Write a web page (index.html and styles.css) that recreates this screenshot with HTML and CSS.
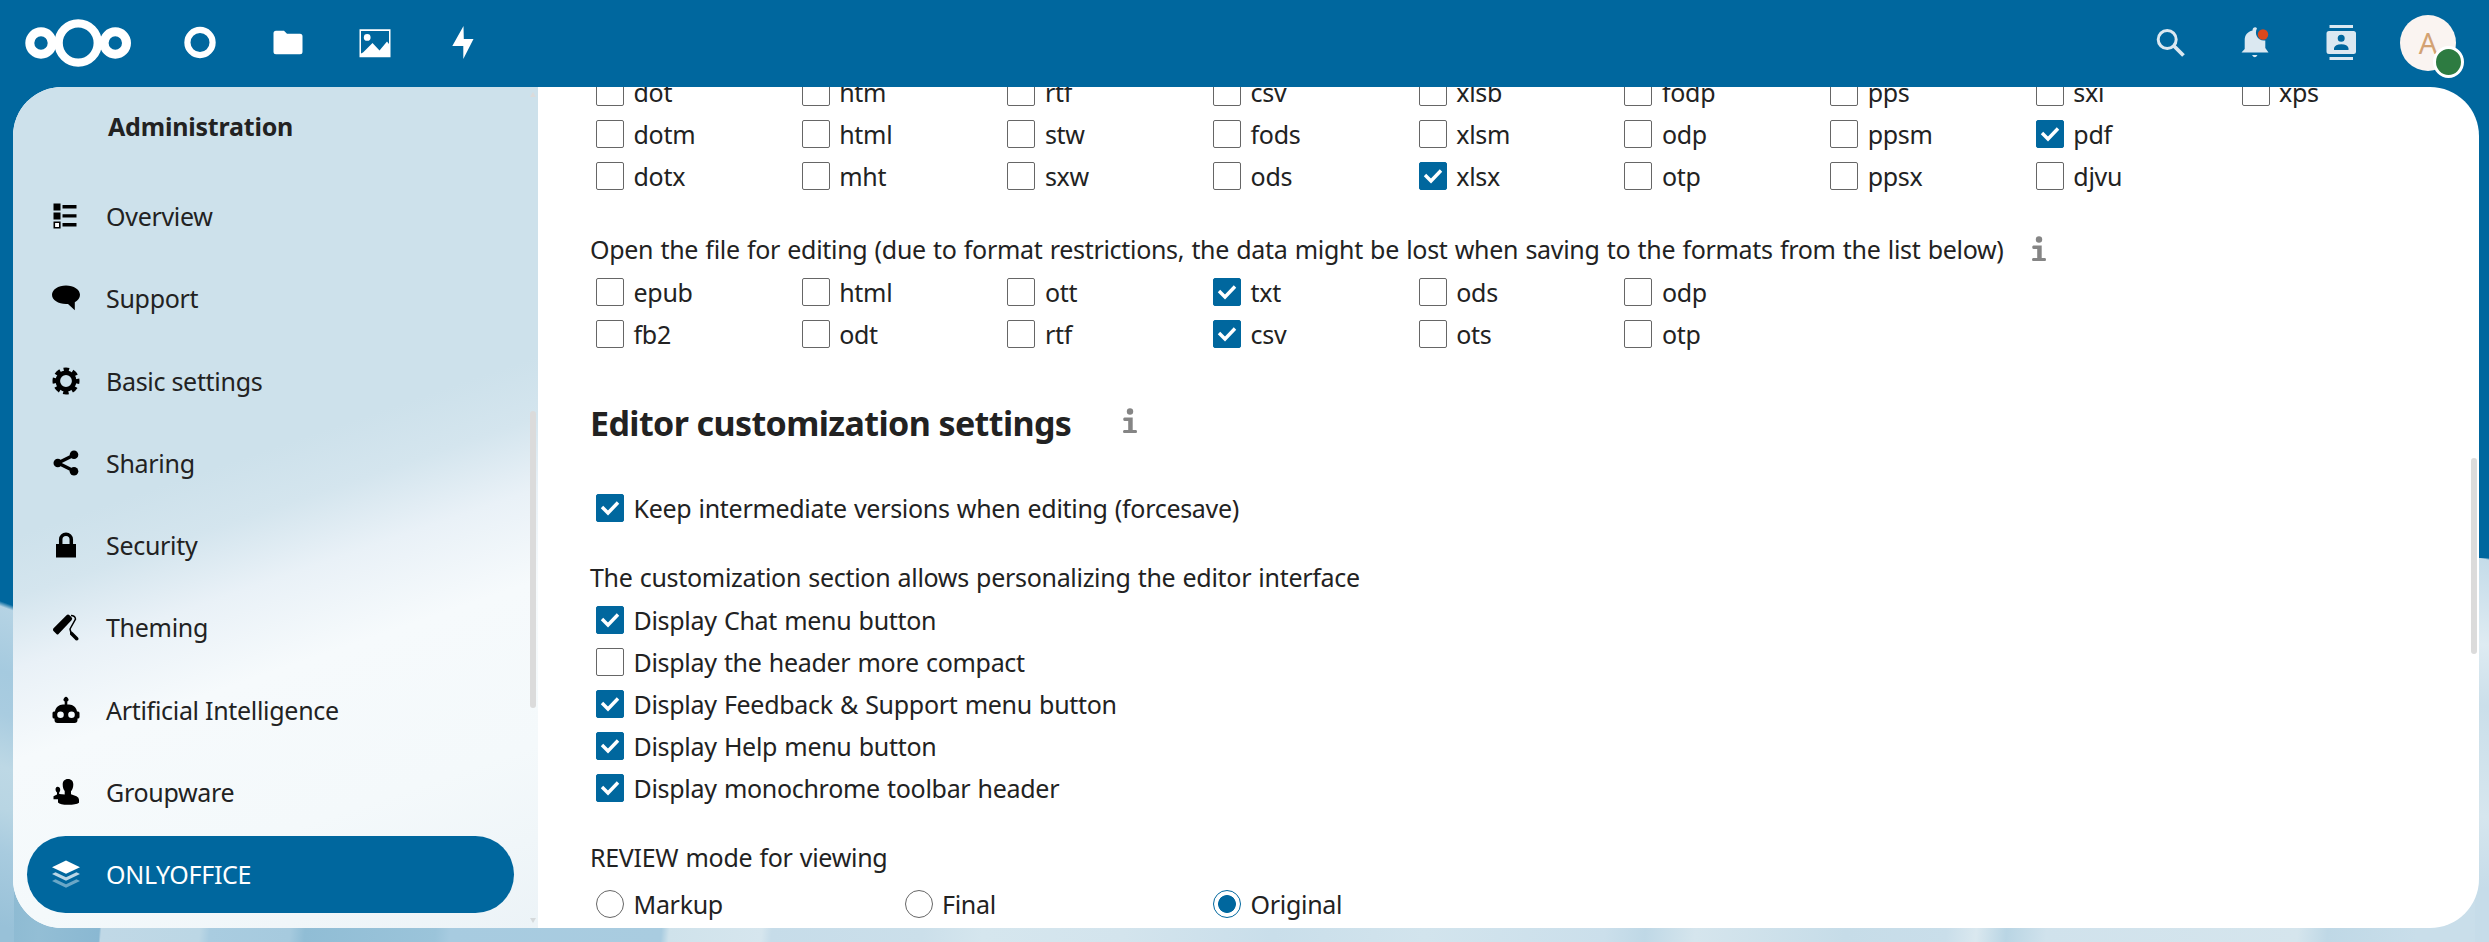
FILE: index.html
```html
<!DOCTYPE html>
<html lang="en">
<head>
<meta charset="utf-8">
<title>ONLYOFFICE - Administration settings</title>
<link rel="stylesheet" href="styles.css">
</head>
<body>
<header class="topbar">
  <svg class="logo" viewBox="0 0 108 50"><g fill="none" stroke="#fff"><circle cx="17" cy="25" r="11.2" stroke-width="9"/><circle cx="54.2" cy="25" r="19.6" stroke-width="8.4"/><circle cx="91.3" cy="25" r="11.2" stroke-width="9"/></g></svg>
  <nav class="apps">
    <svg class="app" viewBox="0 0 36 36"><circle cx="18" cy="17.5" r="12.6" fill="none" stroke="#fff" stroke-width="6.2"/></svg>
    <svg class="app" viewBox="0 0 36 36"><path fill="#fff" d="M5 5.8h9l3 3h13q2.500 0 2.500 2.500v15.500q0 2.500-2.500 2.500h-24q-2.500 0-2.500-2.500V8.300q0-2.500 2.500-2.500z"/></svg>
    <svg class="app" viewBox="0 0 36 36"><path fill="#fff" fill-rule="evenodd" d="M2.500 4.300h31v28h-31zM4 6v22.500l2-1 9.500-9.500 7 7.500L30 16.500l2 2.500V6zM10.200 9a3.400 3.400 0 1 1 0 6.800A3.400 3.400 0 1 1 10.200 9z"/></svg>
    <svg class="app" viewBox="0 0 36 36"><path fill="#fff" d="M18.500 1l-11.200 20h11v13L28.500 14h-9.700z"/></svg>
  </nav>
  <div class="tools">
    <svg class="tool" viewBox="0 0 40 40"><g fill="none" stroke="#dbe8f1"><circle cx="16.200" cy="16.500" r="9" stroke-width="3"/><path stroke-width="3.800" d="M22 22l10.500 10.500"/></g></svg>
    <svg class="tool bell" viewBox="0 0 40 40"><path fill="#dbe8f1" d="M17.500 7.500C17.500 4 21 3.500 22 5.500c-3 5 .5 13 8.300 12V25l3.200 4.500h-27L9.700 26V17c0-5 3-8.500 7.800-9.500zM17 32h5.500q-2.700 4.500-5.500 0z"/><circle cx="28" cy="11.500" r="5.200" fill="#d9481c"/></svg>
    <svg class="tool" viewBox="0 0 40 40"><path fill="#dbe8f1" fill-rule="evenodd" d="M8.500 2h23.500v3H8.500zM8.500 34h23.500v3H8.500zM8 8h24.500q2.500 0 2.500 2.500v18q0 2.500-2.500 2.500H8q-2.500 0-2.500-2.500v-18Q5.500 8 8 8zm12.200 3.800a3.500 3.500 0 1 0 0 7 3.500 3.500 0 1 0 0-7zM13 27h14.500v-2q-1-3.500-7.200-3.700-6.300.2-7.300 3.700z"/></svg>
    <div class="avatar">A<span class="status"></span></div>
  </div>
</header>
<div class="panel">
  <aside class="sidebar">
    <h2 class="caption">Administration</h2>
    <ul class="menu">
      <li class="item"><svg class="icon" viewBox="0 0 28 28"><path d="M1.500 1.500h7v7h-7zM10.500 3h14v3.500h-14zM1.500 10.500h7v7h-7zM10.500 12.200h14v3.300h-14zM10.500 21h14v3.500h-14z"/><path fill="#fff" stroke="#000" stroke-width="1.600" d="M2.300 20.300h5.500v5.500H2.300z"/></svg>Overview</li>
      <li class="item"><svg class="icon" viewBox="0 0 28 28"><path d="M14 1.500c7.700 0 14 4 14 9.300 0 3-2 5.800-5.200 7.500v8l-6.800-6.400-2 .1C6.300 20 0 16 0 10.800S6.300 1.500 14 1.500z"/></svg>Support</li>
      <li class="item"><svg class="icon" viewBox="0 0 28 28"><circle cx="14" cy="14" r="8.200" fill="none" stroke="#000" stroke-width="4.600"/><path fill="none" stroke="#000" stroke-width="5" stroke-dasharray="5.200 3.439" stroke-dashoffset="2.600" d="M25 14a11 11 0 1 1-22 0 11 11 0 1 1 22 0z"/></svg>Basic settings</li>
      <li class="item"><svg class="icon" viewBox="0 0 28 28"><path fill="none" stroke="#000" stroke-width="3.500" d="M22 6L6 14l16 8"/><circle cx="22" cy="5.800" r="4.300"/><circle cx="5.800" cy="14" r="4.300"/><circle cx="22" cy="22.300" r="4.300"/></svg>Sharing</li>
      <li class="item"><svg class="icon" viewBox="0 0 28 28"><path d="M4 13h20v13.500H4z"/><path fill="none" stroke="#000" stroke-width="3.500" d="M8.700 14V8.500a5.300 5.300 0 0 1 10.600 0V14"/></svg>Security</li>
      <li class="item"><svg class="icon" viewBox="0 0 28 28"><path d="M1.300 15.500L14.500 2.300q1.500-1.500 3 0l2 2q1.500 1.500 0 3L6.500 21q-1 1-2 0l-3-3q-1-1-.2-2.500z"/><path fill="none" stroke="#000" stroke-width="1.500" d="M19 2.500q4 0 4.500 3.500l-5.500 10 1 4"/><path d="M18 19q1.500-1 3 .5l5 5q1.500 2-1 3-1.500 0-2.500-1.500l-4.500-4.500z"/></svg>Theming</li>
      <li class="item"><svg class="icon" viewBox="0 0 28 28"><path fill-rule="evenodd" d="M12.700 5.500a2.400 2.400 0 1 1 2.600 0V8.500H17c4 0 7.500 3 8 7h1q1.500 0 1.500 1.500v4q0 1.500-1.500 1.500h-.5V24q0 3-3 3h-17q-3 0-3-3v-1.500H2Q.5 22.500.5 21v-4q0-1.500 1.500-1.500h1c.5-4 4-7 8-7h1.700zM8.500 15.500a3.300 3.300 0 1 0 0 6.600 3.300 3.300 0 1 0 0-6.600zm11 0a3.300 3.300 0 1 0 0 6.600 3.300 3.300 0 1 0 0-6.600z"/></svg>Artificial Intelligence</li>
      <li class="item"><svg class="icon" viewBox="0 0 28 28"><path d="M16 1c3.500 0 5.300 2.300 5.300 5.500 0 3-.8 5-2.300 6.800v3l5.500 2q2.500 1 2.500 3.500v3q-3 2-11 2T6 24.500v-3.200H1.500v-3L5 16.500v-2c-2-1.500-2-5.500.5-5.700 3-.2 3.500 4 1.700 5.700v1.500l5.500.5V13c-1.300-1.500-2-3.500-2-6.500C10.700 3.300 12.500 1 16 1z"/></svg>Groupware</li>
      <li class="item active"><svg class="icon" viewBox="0 0 28 28"><path fill="#fff" d="M14 .5l14 6.700-14 6.500L0 7.200z"/><path fill="#b9d6e6" d="M0 14l3.500-1.700L14 17.200l10.500-4.900L28 14l-14 6.700z"/><path fill="#6aa7c7" d="M0 21l3.500-1.700L14 24.200l10.500-4.900L28 21l-14 6.700z"/></svg>ONLYOFFICE</li>
    </ul>
    <span class="arrow up"></span><span class="bar side-bar"></span><span class="arrow down"></span>
  </aside>
  <main class="content">
    <div class="grid first">
      <span class="opt">dot</span><span class="opt">htm</span><span class="opt">rtf</span><span class="opt">csv</span><span class="opt">xlsb</span><span class="opt">fodp</span><span class="opt">pps</span><span class="opt">sxi</span><span class="opt">xps</span>
      <span class="opt">dotm</span><span class="opt">html</span><span class="opt">stw</span><span class="opt">fods</span><span class="opt">xlsm</span><span class="opt">odp</span><span class="opt">ppsm</span><span class="opt on">pdf</span><span></span>
      <span class="opt">dotx</span><span class="opt">mht</span><span class="opt">sxw</span><span class="opt">ods</span><span class="opt on">xlsx</span><span class="opt">otp</span><span class="opt">ppsx</span><span class="opt">djvu</span>
    </div>
    <p class="text lead"><span class="lead-text">Open the file for editing (due to format restrictions, the data might be lost when saving to the formats from the list below)</span><svg class="info" viewBox="0 0 16 26"><circle cx="8" cy="3.500" r="3.200"/><path d="M2.500 9.500h8.200V22H14q1 0 1 1.500T14 25H2.200q-1.200 0-1.200-1.500T2.200 22h4v-9H2.500q-1.300 0-1.300-1.700t1.300-1.800z"/></svg></p>
    <div class="grid">
      <span class="opt">epub</span><span class="opt">html</span><span class="opt">ott</span><span class="opt on">txt</span><span class="opt">ods</span><span class="opt">odp</span><span></span><span></span><span></span>
      <span class="opt">fb2</span><span class="opt">odt</span><span class="opt">rtf</span><span class="opt on">csv</span><span class="opt">ots</span><span class="opt">otp</span>
    </div>
    <h2 class="title"><span class="title-text">Editor customization settings</span><svg class="info" viewBox="0 0 16 26"><circle cx="8" cy="3.500" r="3.200"/><path d="M2.500 9.500h8.200V22H14q1 0 1 1.500T14 25H2.200q-1.200 0-1.200-1.500T2.200 22h4v-9H2.500q-1.300 0-1.300-1.700t1.300-1.800z"/></svg></h2>
    <div class="list"><span class="opt on">Keep intermediate versions when editing (forcesave)</span></div>
    <p class="text section">The customization section allows personalizing the editor interface</p>
    <div class="list">
      <span class="opt on">Display Chat menu button</span>
      <span class="opt">Display the header more compact</span>
      <span class="opt on">Display Feedback &amp; Support menu button</span>
      <span class="opt on">Display Help menu button</span>
      <span class="opt on">Display monochrome toolbar header</span>
    </div>
    <p class="text section">REVIEW mode for viewing</p>
    <div class="radios"><span class="opt radio">Markup</span><span class="opt radio">Final</span><span class="opt radio on">Original</span></div>
    <span class="bar main-bar"></span>
  </main>
</div>
</body>
</html>
```
FILE: styles.css
```css
* { box-sizing: border-box; }
body {
  margin: 0; width: 2489px; height: 942px; overflow: hidden;
  font-family: "Noto Sans", "Open Sans", sans-serif; font-size: 25px; color: #222;
  background:
    linear-gradient(#00679e, #00679e) 0 0 / 100% 558px no-repeat,
    linear-gradient(200deg, #00679e 45px, #b5d3e4 50px, #a5cadf 110px, #a9cce0 150px, #bdd8e5 200px, #b8d5e3 240px, #a8cbdf 280px, #98c1d8 350px) 0 558px / 14px 384px no-repeat,
    linear-gradient(190deg, #00679e 4px, #c5dce9 6px, #deebf2 90px, #cbdfea 150px, #d6e6ee 260px, #c6dce9 330px) 100% 554px / 14px 388px no-repeat,
    linear-gradient(95deg, #9cc4da 0, #88b7d0 60px, #93bed5 120px, #8ab8d2 180px, #c0d8e6 182px, #bcd7e5 280px, #a9cce0 290px, #a6cade 370px, #90bdd5 385px, #9bc4da 515px, #a7cbe0 530px, #a9cce0 740px, #cfe2eb 748px, #d6e6ee 840px, #c6dce9 850px, #cbdfea 1000px, #d5e6ee 1060px, #d3e4ed 1200px, #c9deea 1350px, #d2e4ed 1500px, #cbdfeb 1680px, #bfd8e6 1720px, #d5e5ed 1770px, #c6dce8 1920px, #c9deea 2020px, #dae8ef 2050px, #b9d5e4 2080px, #d0e2ec 2120px, #d5e5ed 2370px, #bfd8e6 2400px, #c9deea 2489px);
}
.topbar { height: 87px; display: flex; align-items: center; padding: 0 26px 0 24px; }
.logo { width: 108px; height: 50px; margin-bottom: 1px; }
.apps { display: flex; gap: 51.500px; margin: 0 0 1px 50px; }
.app { width: 36px; height: 36px; }
.tools { display: flex; align-items: center; margin-left: auto; height: 87px; }
.tool { width: 40px; height: 40px; margin-right: 45px; margin-bottom: 2px; }
.bell { margin-left: -1.500px; margin-right: 46.500px; }
.avatar { position: relative; width: 56px; height: 56px; border-radius: 50%; margin: 0 7px 1px -6px; background: #faf4f1; color: #d3a273; text-align: center; line-height: 56px; font-size: 29px; }
.status { position: absolute; left: 33px; top: 31px; width: 31px; height: 32px; border-radius: 50%; border: 3px solid #fff; background: #2d7b41; }
.panel { display: flex; width: 2466px; height: 841px; margin-left: 13px; border-radius: 49px; overflow: hidden; background: #fff; }
.sidebar { position: relative; width: 525px; padding: 0 24px 0 14px; background: linear-gradient(161deg, #cde1eb 44%, #d4e5ee 50%, #e9f1f7 57%, #f6fafc 66%, #f4f9fb 82%, #ecf3f7 100%); }
.caption { margin: 0 0 51px; padding: 21px 0 0 81px; height: 40px; line-height: 36px; font-size: 25px; font-weight: 700; letter-spacing: -.2px; }
.menu { list-style: none; margin: 0; padding: 0; display: flex; flex-direction: column; gap: 5.250px; }
.item { height: 77px; display: flex; align-items: center; border-radius: 39px; padding: 0 0 1px 25px; letter-spacing: -.3px; }
.icon { width: 28px; height: 28px; margin-right: 26px; }
.item.active { background: #00679e; color: #fff; }
.bar { position: absolute; width: 6px; border-radius: 3px; background: #dbdbdb; }
.side-bar { right: 2px; top: 324px; height: 297px; }
.arrow { position: absolute; right: 2px; border: 3px solid transparent; }
.up { top: 2px; border-bottom: 5px solid #dbdbdb; }
.down { bottom: 2px; border-top: 5px solid #d5d9db; }
.content { position: relative; flex: 1; padding-left: 52px; height: 841px; }
.grid { display: grid; grid-template-columns: repeat(9, 205.700px); grid-auto-rows: 42px; }
.first { margin-top: -16px; }
.opt { display: flex; align-items: center; height: 42px; line-height: 34px; padding: 0 0 1px 6px; white-space: nowrap; letter-spacing: -.3px; word-spacing: 1px; }
.opt::before { content: ""; width: 26px; height: 26px; margin: 1px 9.500px 0 0; border: 1px solid #666; border-radius: 2px; background: #fff; }
.opt.on::before { border-color: #00679e; }
.opt.on:not(.radio)::before { background: #00679e url("data:image/svg+xml,%3Csvg xmlns='http://www.w3.org/2000/svg' viewBox='0 0 24 24'%3E%3Cpath d='M4 11l6 6 10-10.500' fill='none' stroke='white' stroke-width='3.400'/%3E%3C/svg%3E") center/24px; }
.opt.radio::before { border-radius: 50%; }
.radio.on::before { background: radial-gradient(circle, #00679e 8.500px, #fff 9.300px); }
.text { margin: 0; white-space: nowrap; letter-spacing: -.3px; word-spacing: 1px; }
.lead { display: flex; align-items: center; height: 42px; margin-top: 31px; padding-bottom: 1px; margin-bottom: 1px; }
.info { width: 16px; height: 26px; fill: #858585; margin-left: 27px; }
.title { display: flex; align-items: center; height: 48px; margin: 44px 0 0; font-size: 34px; letter-spacing: -.6px; }
.title .info { margin-left: 51px; margin-bottom: 4px; }
.title + .list { margin-top: 40px; }
.section { height: 42px; line-height: 41px; margin-top: 28px; }
.radios { display: grid; grid-template-columns: repeat(3, 308.500px); margin-top: 4px; }
.main-bar { right: 2px; top: 371px; height: 196px; }
```
